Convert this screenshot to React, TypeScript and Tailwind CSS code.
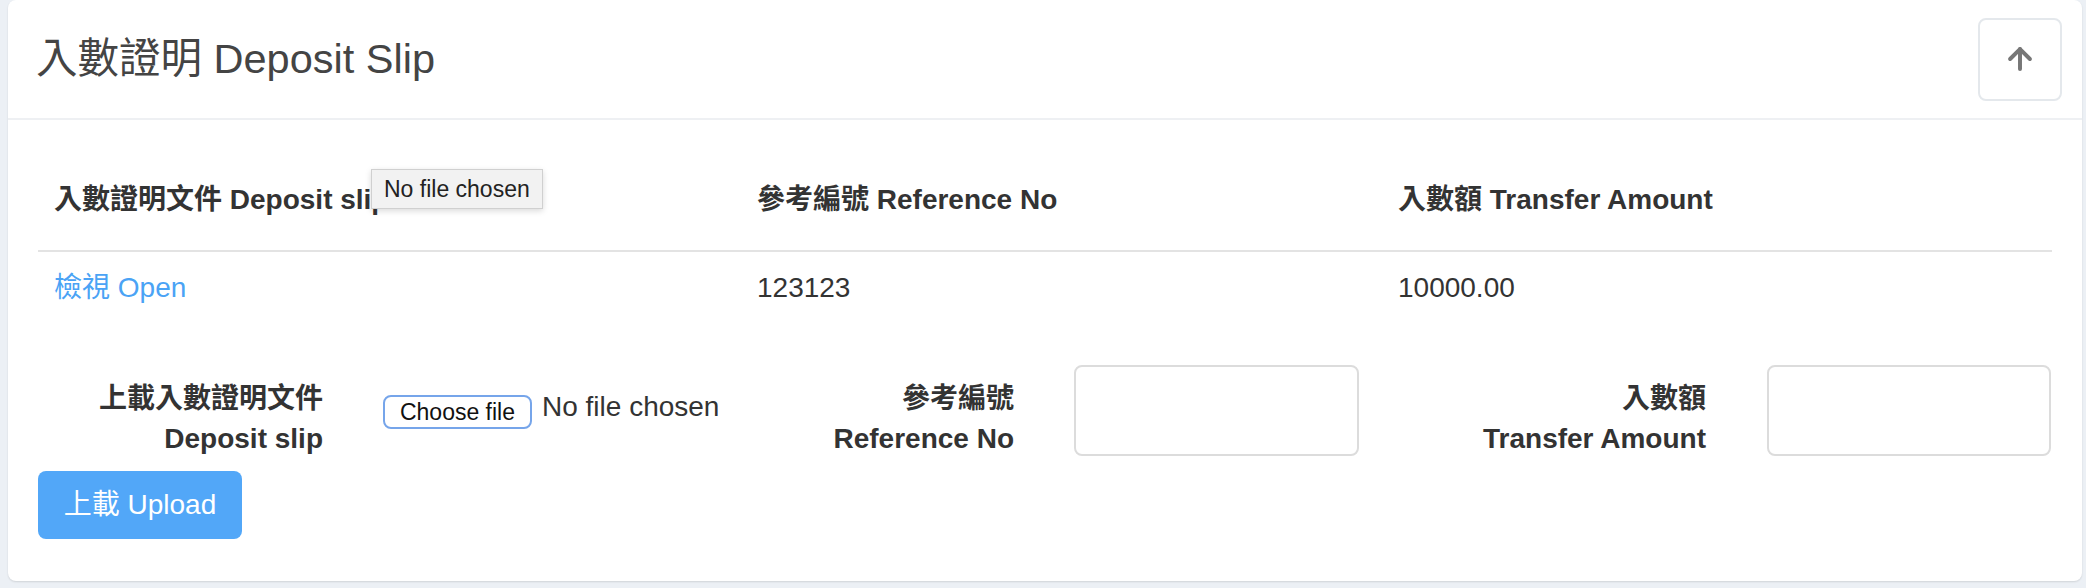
export default function App() {
  return (
    <div className="min-h-screen bg-[#ecf0f5] pl-[8px] pr-[4px] pb-[6px] font-['Liberation_Sans','Noto_Sans_CJK_TC',sans-serif] text-[#333]">
      <div className="bg-white rounded-[8px] shadow-[0_1px_2px_rgba(0,0,0,0.12)]">
        {/* Header */}
        <div className="h-[120px] flex items-center justify-between pl-[28px] pr-[20px] border-b-2 border-[#eef0f3]">
          <h3 className="text-[41.5px] leading-[44px] text-[#444]">入數證明 Deposit Slip</h3>
          <button className="w-[84px] h-[83px] border-2 border-[#e4e8ec] rounded-[8px] bg-white flex items-center justify-center">
            <svg width="34" height="34" viewBox="0 0 24 24" fill="none" stroke="#777" strokeWidth="2.8" strokeLinecap="round" strokeLinejoin="round">
              <path d="m5 12 7-7 7 7" />
              <path d="M12 19V5" />
            </svg>
          </button>
        </div>

        {/* Body */}
        <div className="relative px-[30px] pt-[44px] pb-[42px]">
          <table className="w-full table-fixed text-[28px] leading-[40px]">
            <colgroup>
              <col className="w-[703px]" />
              <col className="w-[641px]" />
              <col />
            </colgroup>
            <thead>
              <tr>
                <th className="text-left font-bold px-[16px] pt-[16px] pb-[30px] border-b-2 border-[#e3e3e3]">入數證明文件 Deposit slip</th>
                <th className="text-left font-bold px-[16px] pt-[16px] pb-[30px] border-b-2 border-[#e3e3e3]">參考編號 Reference No</th>
                <th className="text-left font-bold px-[16px] pt-[16px] pb-[30px] border-b-2 border-[#e3e3e3]">入數額 Transfer Amount</th>
              </tr>
            </thead>
            <tbody>
              <tr>
                <td className="px-[16px] py-[16px]">
                  <a href="#" className="text-[#4aa3f5]">檢視 Open</a>
                </td>
                <td className="px-[16px] py-[16px]">123123</td>
                <td className="px-[16px] py-[16px]">10000.00</td>
              </tr>
            </tbody>
          </table>

          {/* Upload form */}
          <div className="mt-[41px] flex items-start text-[28px] leading-[40px]">
            <label className="w-[285px] shrink-0 pt-[14px] text-right font-bold">
              上載入數證明文件
              <br />
              Deposit slip
            </label>
            <div className="w-[331px] shrink-0 ml-[60px] mt-[22px] flex items-start whitespace-nowrap">
              <span className="shrink-0 mt-[8px] h-[34px] w-[149px] flex items-center justify-center border-2 border-[#76a5ea] rounded-[8px] bg-white text-[23px] leading-none text-[#111]">
                Choose file
              </span>
              <span className="ml-[10px]">No file chosen</span>
            </div>
            <label className="w-[300px] shrink-0 pt-[14px] text-right font-bold">
              參考編號
              <br />
              Reference No
            </label>
            <input type="text" className="shrink-0 ml-[60px] w-[285px] h-[91px] border-2 border-[#dcdcdc] rounded-[8px] outline-none" />
            <label className="w-[347px] shrink-0 pt-[14px] text-right font-bold">
              入數額
              <br />
              Transfer Amount
            </label>
            <input type="text" className="shrink-0 ml-[61px] w-[284px] h-[91px] border-2 border-[#dcdcdc] rounded-[8px] outline-none" />
          </div>

          <button className="mt-[12px] w-[204px] h-[68px] rounded-[8px] bg-[#52a7f8] text-white text-[28px] leading-[40px]">
            上載 Upload
          </button>

          {/* native tooltip */}
          <div className="absolute left-[363px] top-[49px] h-[40px] px-[12px] flex items-center bg-[#f2f2f2] border border-[#d0d0d0] shadow-[0_2px_6px_rgba(0,0,0,0.15)] text-[23px] text-[#222] whitespace-nowrap">
            No file chosen
          </div>
        </div>
      </div>
    </div>
  );
}
